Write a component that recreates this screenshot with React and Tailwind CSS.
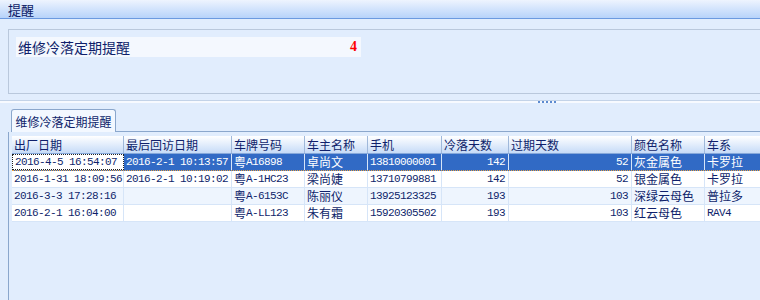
import React from 'react'

const cjk = /([\u3000-\u9fff\uff00-\uffef]+)/

// mixes SimSun-like sizing: latin chars 6px wide, CJK 12px
const T = ({ text }) => (
    <>
        {String(text).split(cjk).map((part, i) =>
            part === '' ? null : cjk.test(part) ? (
                <span key={i} className="text-[12px] font-['Noto_Sans_CJK_SC',sans-serif]">{part}</span>
            ) : (
                <span key={i} className="text-[11px] tracking-[-0.6px] font-['Liberation_Mono',monospace]">{part}</span>
            )
        )}
    </>
)

const columns = [
    { key: 'date', title: '出厂日期', w: 'w-[112px]' },
    { key: 'visit', title: '最后回访日期', w: 'w-[108px]' },
    { key: 'plate', title: '车牌号码', w: 'w-[73px]' },
    { key: 'owner', title: '车主名称', w: 'w-[63px]' },
    { key: 'phone', title: '手机', w: 'w-[74px]' },
    { key: 'cold', title: '冷落天数', w: 'w-[67px]', right: true },
    { key: 'over', title: '过期天数', w: 'w-[123px]', right: true },
    { key: 'color', title: '颜色名称', w: 'w-[73px]' },
    { key: 'series', title: '车系', w: 'w-[80px]' },
]

const rows = [
    { date: '2016-4-5 16:54:07', visit: '2016-2-1 10:13:57', plate: '粤A16898', owner: '卓尚文', phone: '13810000001', cold: 142, over: 52, color: '灰金属色', series: '卡罗拉' },
    { date: '2016-1-31 18:09:56', visit: '2016-2-1 10:19:02', plate: '粤A-1HC23', owner: '梁尚婕', phone: '13710799881', cold: 142, over: 52, color: '银金属色', series: '卡罗拉' },
    { date: '2016-3-3 17:28:16', visit: '', plate: '粤A-6153C', owner: '陈丽仪', phone: '13925123325', cold: 193, over: 103, color: '深绿云母色', series: '普拉多' },
    { date: '2016-2-1 16:04:00', visit: '', plate: '粤A-LL123', owner: '朱有霜', phone: '15920305502', cold: 193, over: 103, color: '红云母色', series: 'RAV4' },
]

const App = () => {
    return (
        <div className="w-[760px] h-[300px] overflow-hidden bg-[#e1edfd] text-[#0f1f6b] font-['Noto_Sans_CJK_SC',sans-serif]">
            {/* title bar */}
            <div className="h-[19px] bg-gradient-to-b from-[#eef4fe] to-[#b7d3fa] border-b border-[#6c9ae0] pl-[8px] flex items-center text-[13px] leading-none text-[#0c1a66]">
                提醒
            </div>

            {/* summary panel */}
            <div className="pt-[10px] pl-[8px]">
                <div className="h-[65px] border border-r-0 border-[#b9c8dc] pt-[7px] pl-[7px]">
                    <div className="w-[345px] h-[20px] bg-[#f4f8fe] flex items-center justify-between pl-[2px] pr-[4px]">
                        <span className="text-[14px] leading-none">维修冷落定期提醒</span>
                        <span className="text-[14px] leading-none font-bold text-[#ff0000] font-['Liberation_Serif',serif]">4</span>
                    </div>
                </div>
            </div>

            {/* splitter */}
            <div className="mt-[6px] border-t border-[#c3d3e8] h-[3px] bg-[#f7faff] flex items-center pl-[538px] gap-[2px]">
                {[0, 1, 2, 3, 4].map(i => (
                    <span key={i} className="w-[2px] h-[2px] bg-[#5c8ad0]" />
                ))}
            </div>

            {/* tab strip */}
            <div className="mt-[6px] pl-[8px]">
                <div className="flex items-end h-[23px]">
                    <div className="ml-[3px] w-[105px] h-[23px] border border-b-0 border-[#8ba7cc] rounded-t-[3px] bg-[#f3f8ff] flex items-center justify-center text-[12px] leading-none pt-[2px]">
                        维修冷落定期提醒
                    </div>
                    <div className="flex-1 border-b border-[#8ba7cc]" />
                </div>

                {/* tab body */}
                <div className="border-l border-[#8ba7cc] pl-[3px] pt-[4px] h-[200px]">
                    {/* header */}
                    <div className="flex h-[18px] bg-gradient-to-b from-[#ffffff] to-[#c6dbf7] border-b border-[#86a8da]">
                        {columns.map(c => (
                            <div key={c.key} className={`${c.w} shrink-0 border-r border-[#9fb8da] pl-[2px] flex items-center leading-none`}>
                                <span className="text-[12px]">{c.title}</span>
                            </div>
                        ))}
                    </div>

                    {/* body rows */}
                    {rows.map((r, ri) => {
                        const sel = ri === 0
                        const bg = sel ? 'bg-[#316ac5] text-white' : ri === 2 ? 'bg-[#eef5fe]' : 'bg-white'
                        return (
                            <div key={ri} className={`flex h-[17px] ${bg} ${sel ? 'border-b border-dotted border-[#e8a040]' : 'border-b border-[#d6e5f8]'}`}>
                                {columns.map((c, ci) => {
                                    const focus = sel && ci === 0
                                    return (
                                        <div
                                            key={c.key}
                                            className={`${c.w} shrink-0 flex items-center leading-none whitespace-nowrap overflow-hidden ${c.right ? 'justify-end pr-[3px]' : 'pl-[2px]'} ${focus ? 'bg-white text-[#0f1f6b] border border-dotted border-[#202020]' : 'border-r border-[#d6e5f8]'}`}
                                        >
                                            <T text={r[c.key]} />
                                        </div>
                                    )
                                })}
                            </div>
                        )
                    })}
                </div>
            </div>
        </div>
    )
}

export default App
